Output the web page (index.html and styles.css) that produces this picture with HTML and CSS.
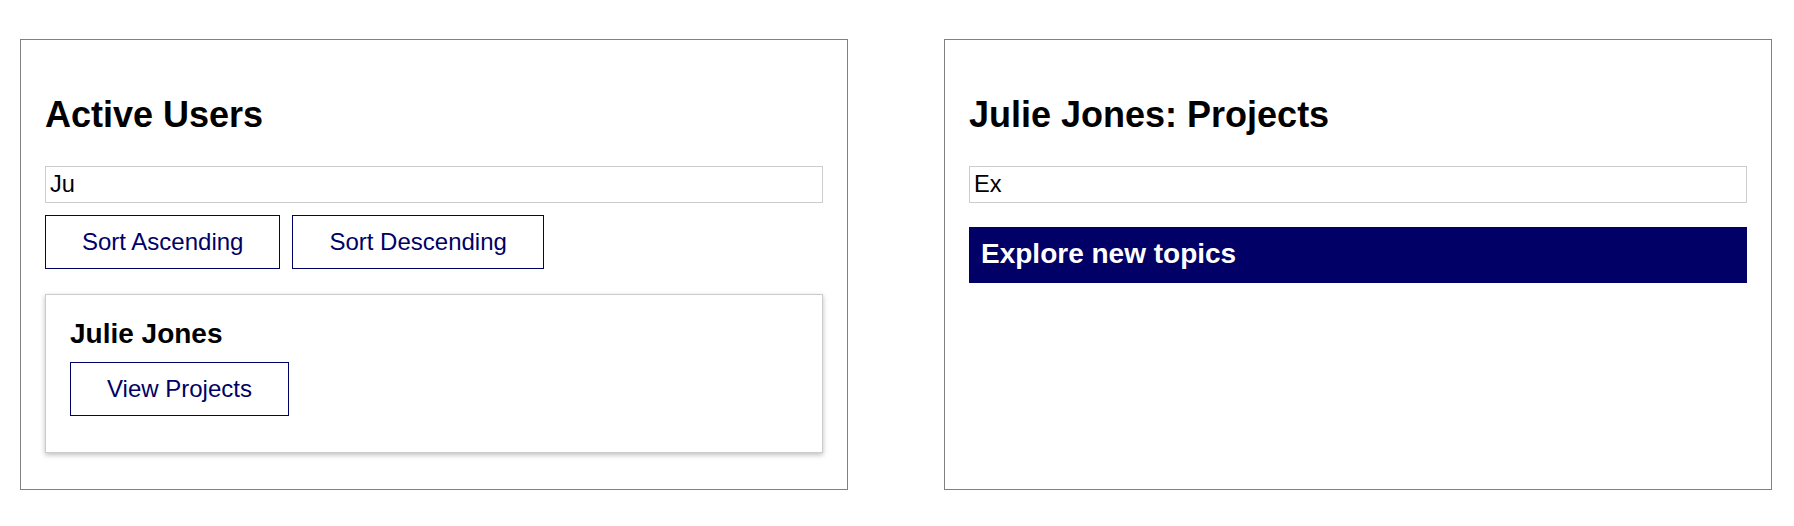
FILE: index.html
```html
<!DOCTYPE html>
<html lang="en">
<head>
<meta charset="utf-8">
<title>Users and Projects</title>
<link rel="stylesheet" href="styles.css">
</head>
<body>
<div class="layout">
  <section class="panel">
    <h1 class="panel-title">Active Users</h1>
    <input class="search" type="text" value="Ju">
    <div class="sort-row">
      <button class="btn">Sort Ascending</button>
      <button class="btn">Sort Descending</button>
    </div>
    <div class="user-card">
      <h3 class="user-name">Julie Jones</h3>
      <button class="btn">View Projects</button>
    </div>
  </section>
  <section class="panel">
    <h1 class="panel-title">Julie Jones: Projects</h1>
    <input class="search" type="text" value="Ex">
    <div class="project-banner">Explore new topics</div>
  </section>
</div>
</body>
</html>
```
FILE: styles.css
```css
html, body {
  margin: 0;
  padding: 0;
  background: #ffffff;
}

body {
  font-family: "Liberation Sans", Arial, sans-serif;
  color: #000000;
}

.layout {
  display: flex;
  align-items: stretch;
  gap: 96px;
  padding: 39px 22px 0 20px;
}

.panel {
  box-sizing: border-box;
  width: 828px;
  flex: 0 0 828px;
  border: 1px solid #808080;
  padding: 24px;
  display: flex;
  flex-direction: column;
  align-items: stretch;
}

.panel-title {
  font-size: 36px;
  line-height: 42px;
  font-weight: bold;
  margin: 30px 0 30px;
}

.search {
  box-sizing: border-box;
  height: 37px;
  width: 100%;
  margin: 0;
  padding: 0 4px;
  border: 1px solid #cccccc;
  font-family: "Liberation Sans", Arial, sans-serif;
  font-size: 23.6px;
  color: #000000;
  background: #ffffff;
  outline: none;
}

.sort-row {
  display: flex;
  gap: 12px;
  margin-top: 12px;
}

.btn {
  box-sizing: border-box;
  font-family: "Liberation Sans", Arial, sans-serif;
  font-size: 24px;
  line-height: 28px;
  padding: 12px 36px;
  border: 1px solid #000066;
  background: #ffffff;
  color: #000066;
  border-radius: 0;
  cursor: pointer;
}

.user-card {
  margin: 25px 0 12px;
  border: 1px solid #cccccc;
  box-shadow: 0 2px 5px rgba(0, 0, 0, 0.25);
  padding: 23px 24px 36px;
  display: flex;
  flex-direction: column;
  align-items: flex-start;
}

.user-name {
  font-size: 28px;
  line-height: 32px;
  font-weight: bold;
  margin: 0 0 12px;
}

.project-banner {
  margin-top: 24px;
  background: #000066;
  color: #ffffff;
  font-size: 28px;
  line-height: 32px;
  font-weight: bold;
  padding: 11px 12px 13px;
}
```
